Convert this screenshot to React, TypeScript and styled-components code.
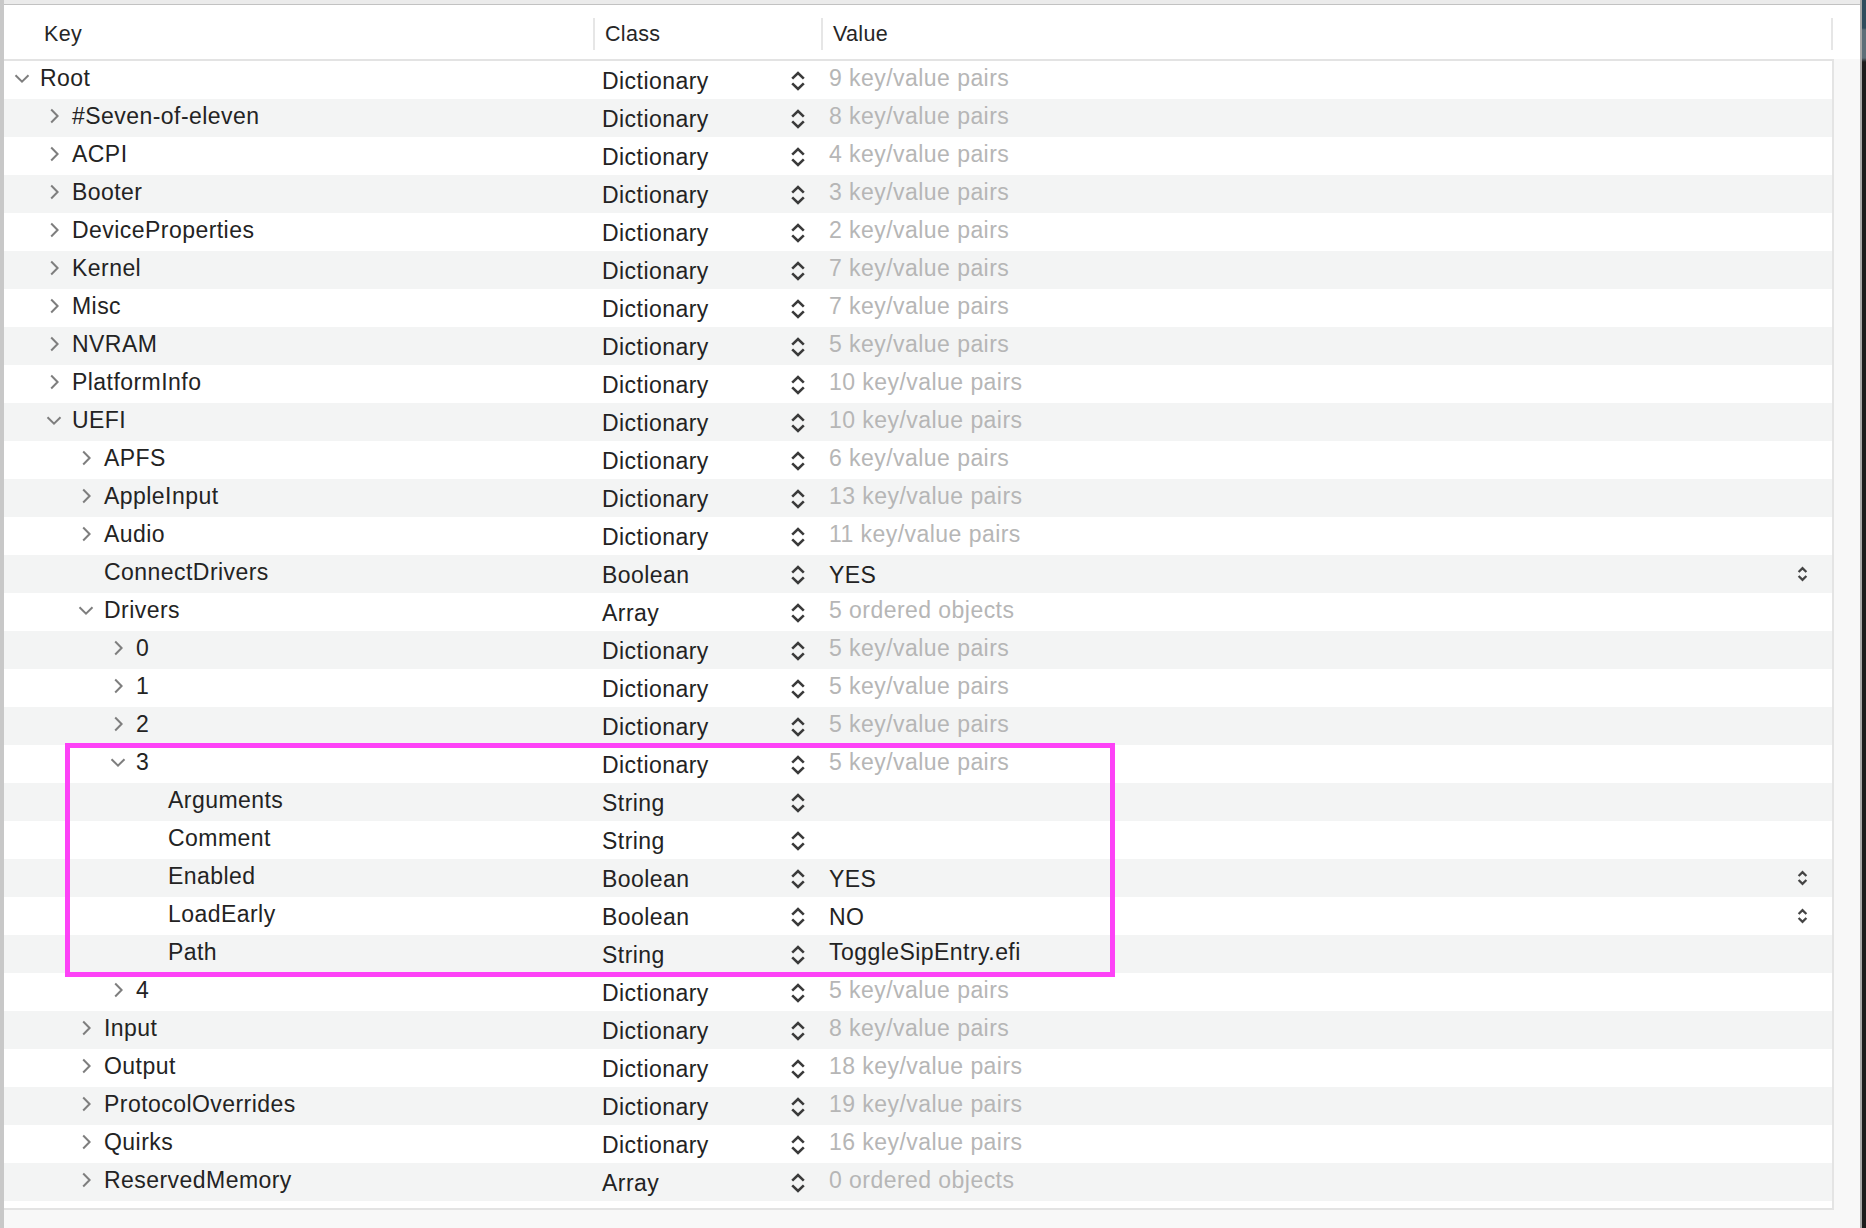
import React from 'react'
import styled, { createGlobalStyle } from 'styled-components'

type Kind = 'container' | 'bool' | 'string'
type Twisty = 'open' | 'closed' | 'none'

interface Entry {
  level: number
  name: string
  cls: string
  value: string
  kind: Kind
  twisty: Twisty
}

const dict = (level: number, name: string, n: number, twisty: Twisty = 'closed'): Entry => ({
  level, name, cls: 'Dictionary', value: `${n} key/value pairs`, kind: 'container', twisty,
})

const rows: Entry[] = [
  dict(0, 'Root', 9, 'open'),
  dict(1, '#Seven-of-eleven', 8),
  dict(1, 'ACPI', 4),
  dict(1, 'Booter', 3),
  dict(1, 'DeviceProperties', 2),
  dict(1, 'Kernel', 7),
  dict(1, 'Misc', 7),
  dict(1, 'NVRAM', 5),
  dict(1, 'PlatformInfo', 10),
  dict(1, 'UEFI', 10, 'open'),
  dict(2, 'APFS', 6),
  dict(2, 'AppleInput', 13),
  dict(2, 'Audio', 11),
  { level: 2, name: 'ConnectDrivers', cls: 'Boolean', value: 'YES', kind: 'bool', twisty: 'none' },
  { level: 2, name: 'Drivers', cls: 'Array', value: '5 ordered objects', kind: 'container', twisty: 'open' },
  dict(3, '0', 5),
  dict(3, '1', 5),
  dict(3, '2', 5),
  dict(3, '3', 5, 'open'),
  { level: 4, name: 'Arguments', cls: 'String', value: '', kind: 'string', twisty: 'none' },
  { level: 4, name: 'Comment', cls: 'String', value: '', kind: 'string', twisty: 'none' },
  { level: 4, name: 'Enabled', cls: 'Boolean', value: 'YES', kind: 'bool', twisty: 'none' },
  { level: 4, name: 'LoadEarly', cls: 'Boolean', value: 'NO', kind: 'bool', twisty: 'none' },
  { level: 4, name: 'Path', cls: 'String', value: 'ToggleSipEntry.efi', kind: 'string', twisty: 'none' },
  dict(3, '4', 5),
  dict(2, 'Input', 8),
  dict(2, 'Output', 18),
  dict(2, 'ProtocolOverrides', 19),
  dict(2, 'Quirks', 16),
  { level: 2, name: 'ReservedMemory', cls: 'Array', value: '0 ordered objects', kind: 'container', twisty: 'closed' },
]

const ROW_H = 38

function Chevron({ dir }: { dir: Twisty }) {
  if (dir === 'none') return null
  if (dir === 'open') {
    return (
      <svg width="16" height="9" viewBox="0 0 16 9">
        <path d="M1.5 1.2 L8 7.6 L14.5 1.2" fill="none" stroke="#7e7e7e" strokeWidth="2" />
      </svg>
    )
  }
  return (
    <svg width="9" height="16" viewBox="0 0 9 16">
      <path d="M1.2 1.5 L7.6 8 L1.2 14.5" fill="none" stroke="#7e7e7e" strokeWidth="2" />
    </svg>
  )
}

function Stepper({ small }: { small?: boolean }) {
  if (small) {
    return (
      <svg width="11" height="16" viewBox="0 0 11 16">
        <path d="M1.6 6 L5.5 2.2 L9.4 6" fill="none" stroke="#444" strokeWidth="2.3" />
        <path d="M1.6 10 L5.5 13.8 L9.4 10" fill="none" stroke="#444" strokeWidth="2.3" />
      </svg>
    )
  }
  return (
    <svg width="16" height="22" viewBox="0 0 16 22">
      <path d="M2.2 8.6 L8 3 L13.8 8.6" fill="none" stroke="#3a3a3a" strokeWidth="2.6" />
      <path d="M2.2 13.4 L8 19 L13.8 13.4" fill="none" stroke="#3a3a3a" strokeWidth="2.6" />
    </svg>
  )
}

export default function App() {
  return (
    <>
      <GlobalStyle />
      <Frame>
        <Window>
          <TitleStrip />
          <Header>
            <HeaderCell>Key</HeaderCell>
            <HeaderCell $sep>Class</HeaderCell>
            <HeaderCell $sep>Value</HeaderCell>
            <HeaderCell $sep />
          </Header>
          <Body>
            <Table>
              {rows.map((r, i) => (
                <Row key={i} $striped={i % 2 === 1}>
                  <KeyCell $level={r.level}>
                    <TwistySlot>
                      <Chevron dir={r.twisty} />
                    </TwistySlot>
                    <KeyText>{r.name}</KeyText>
                  </KeyCell>
                  <ClassCell>
                    <ClassText>{r.cls}</ClassText>
                    <Stepper />
                  </ClassCell>
                  <ValueCell>
                    <ValueText $kind={r.kind}>{r.value}</ValueText>
                    {r.kind === 'bool' && <Stepper small />}
                  </ValueCell>
                </Row>
              ))}
              <Highlight />
            </Table>
            <Gutter />
          </Body>
          <Footer />
        </Window>
        <DarkEdge />
      </Frame>
    </>
  )
}

const GlobalStyle = createGlobalStyle`
  html, body {
    margin: 0;
    padding: 0;
    background: #f8f8f8;
    overflow: hidden;
  }
  body {
    font-family: "Liberation Sans", Arial, Helvetica, sans-serif;
    color: #232323;
  }
`

const Frame = styled.div`
  display: flex;
  width: 1866px;
  height: 1228px;
`

const Window = styled.div`
  flex: 1;
  display: flex;
  flex-direction: column;
  border-left: 4px solid #c8c8c8;
  border-right: 2px solid #a8a8a8;
  background: #f8f8f8;
`

const DarkEdge = styled.div`
  width: 4px;
  background: linear-gradient(#2f4b5c 0, #2f4b5c 28px, #5d6e78 30px, #5d6e78 58px, #1c1c1c 62px, #1c1c1c 100%);
`

const TitleStrip = styled.div`
  height: 4px;
  background: #ebebeb;
  border-bottom: 1px solid #c2c2c2;
`

const Header = styled.div`
  height: 54px;
  display: grid;
  grid-template-columns: 589px 228px 1010px 1fr;
  background: #fff;
`

const HeaderCell = styled.div<{ $sep?: boolean }>`
  position: relative;
  padding: 5px 0 0 ${p => (p.$sep ? 12 : 40)}px;
  line-height: 48px;
  font-size: 21.5px;
  letter-spacing: 0.3px;
  color: #262626;

  &::before {
    content: '';
    display: ${p => (p.$sep ? 'block' : 'none')};
    position: absolute;
    left: 0;
    top: 13px;
    width: 2px;
    height: 32px;
    background: #e6e6e6;
  }
`

const Body = styled.div`
  display: flex;
`

const Table = styled.div`
  position: relative;
  width: 1828px;
  background: #fff;
  border-top: 2px solid #e3e3e3;
  border-right: 2px solid #e4e4e4;
  border-bottom: 2px solid #e3e3e3;
  padding-bottom: 7px;
`

const Gutter = styled.div`
  flex: 1;
  background: #f8f8f8;
`

const Footer = styled.div`
  flex: 1;
  background: #f8f8f8;
`

const Row = styled.div<{ $striped: boolean }>`
  height: ${ROW_H}px;
  display: grid;
  grid-template-columns: 589px 228px 1fr;
  background: ${p => (p.$striped ? '#f3f4f4' : '#ffffff')};
  font-size: 23px;
  line-height: ${ROW_H}px;
  letter-spacing: 0.45px;
  white-space: nowrap;
`

const KeyCell = styled.div<{ $level: number }>`
  display: flex;
  align-items: center;
  padding-left: ${p => 9 + p.$level * 32}px;
`

const TwistySlot = styled.span`
  width: 18px;
  margin-right: 9px;
  display: flex;
  align-items: center;
  justify-content: center;
  margin-top: -4px;
`

const KeyText = styled.span`
  position: relative;
  top: -2px;
  color: #232323;
`

const ClassCell = styled.div`
  display: flex;
  align-items: center;
  justify-content: space-between;
  padding: 0 15px 0 9px;
  color: #232323;

  svg {
    margin-top: 1px;
  }
`

const ClassText = styled.span`
  position: relative;
  top: 1px;
`

const ValueCell = styled.div`
  display: flex;
  align-items: center;
  justify-content: space-between;
  padding: 0 24px 0 8px;
`

const ValueText = styled.span<{ $kind: Kind }>`
  position: relative;
  top: ${p => (p.$kind === 'bool' ? 1 : -2)}px;
  color: ${p => (p.$kind === 'container' ? '#b6b6b6' : '#232323')};
`

const Highlight = styled.div`
  position: absolute;
  left: 61px;
  top: 682px;
  width: 1050px;
  height: 234px;
  box-sizing: border-box;
  border: 5px solid #fd42f7;
  pointer-events: none;
`
